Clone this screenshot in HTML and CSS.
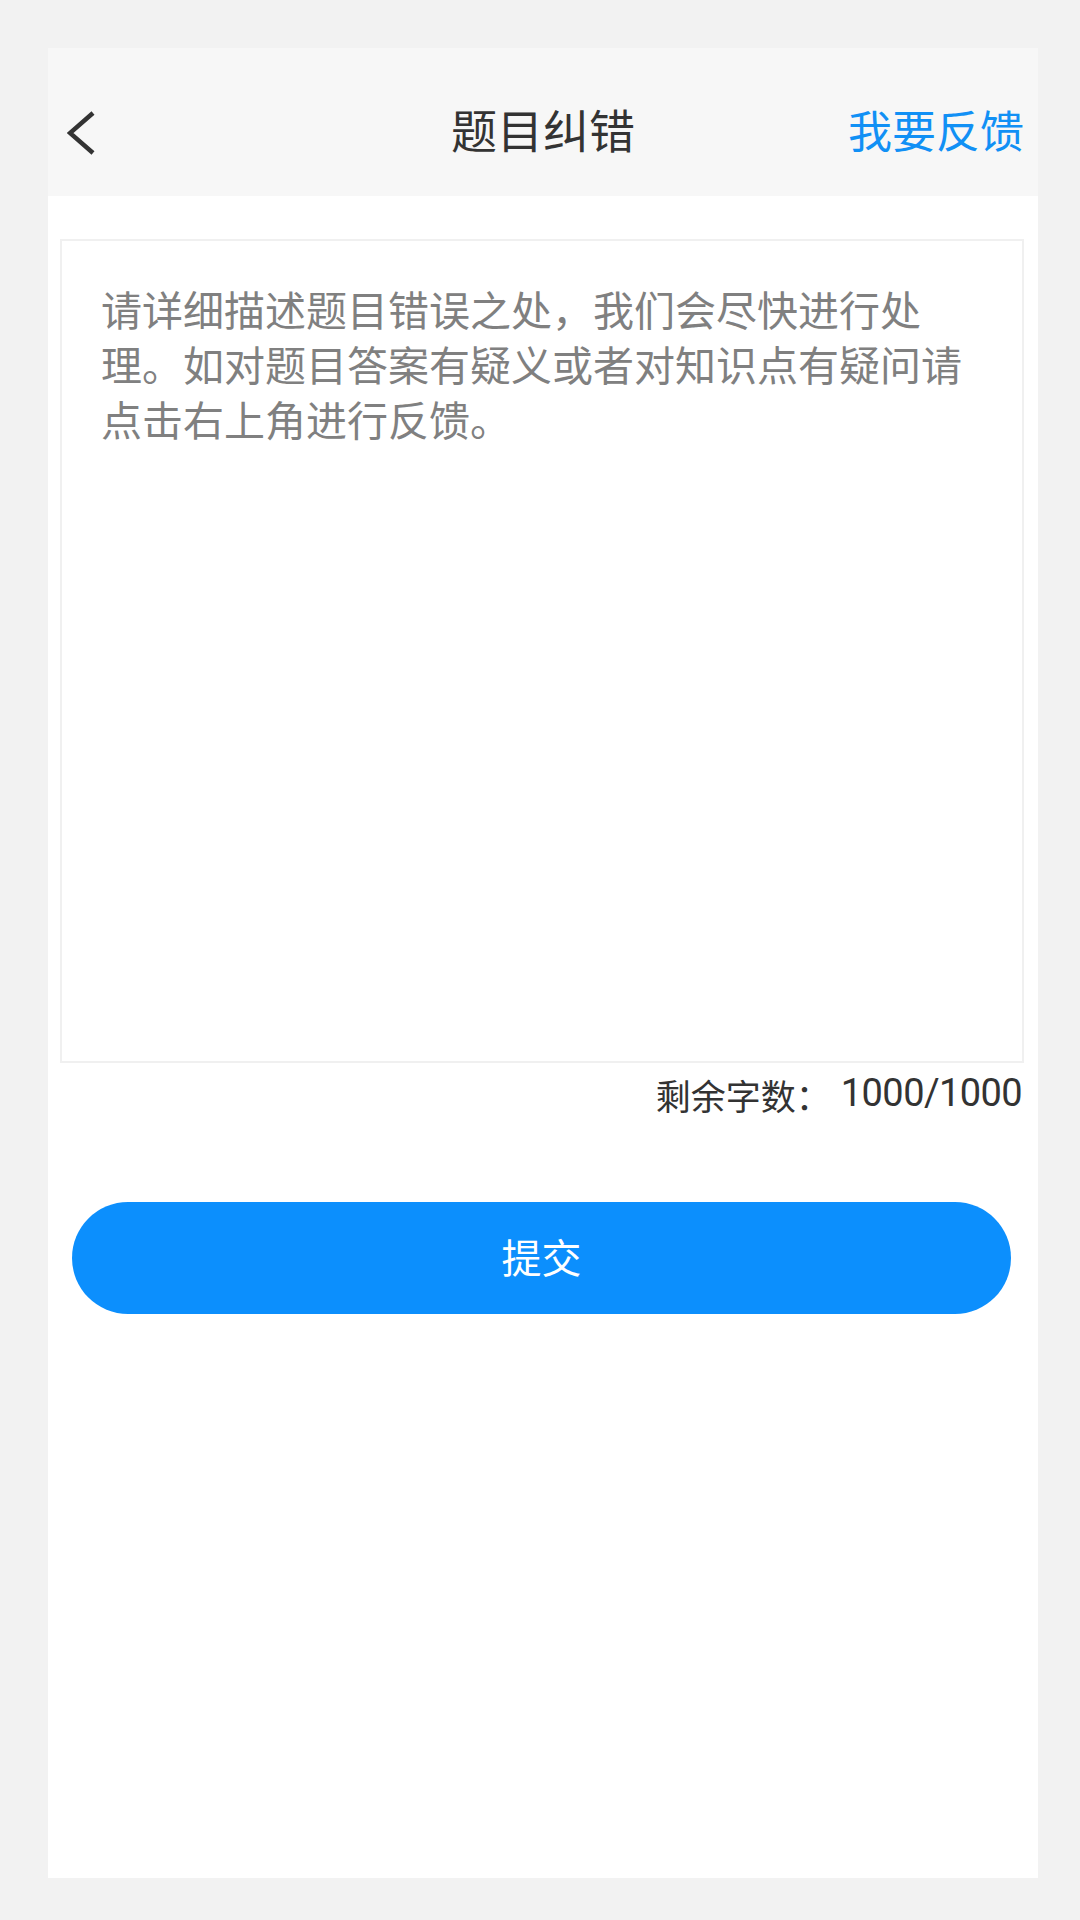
FILE: index.html
```html
<!DOCTYPE html>
<html lang="zh-CN">
<head>
<meta charset="utf-8">
<title>题目纠错</title>
<link rel="stylesheet" href="styles.css">
</head>
<body>
<div class="panel">
  <header class="header">
    <div class="header-left">
      <svg class="back" width="28" height="44" viewBox="0 0 28 44"><polyline points="26,2 3,22 26,42" fill="none" stroke="#333" stroke-width="4.5"/></svg>
    </div>
    <div class="title">题目纠错</div>
    <div class="header-right"><span class="link">我要反馈</span></div>
  </header>
  <main class="content">
    <div class="textbox">请详细描述题目错误之处，我们会尽快进行处理。如对题目答案有疑义或者对知识点有疑问请点击右上角进行反馈。</div>
    <div class="counter"><span class="counter-label">剩余字数：</span><span class="counter-num">1000/1000</span></div>
    <button class="submit">提交</button>
  </main>
</div>
</body>
</html>
```
FILE: styles.css
```css
html, body {
  margin: 0;
  padding: 0;
}
body {
  background: #f2f2f2;
  padding: 48px 42px 42px 48px;
  font-family: "Noto Sans CJK SC", "Noto Sans", sans-serif;
}
.panel {
  width: 990px;
  height: 1830px;
  background: #ffffff;
  display: flex;
  flex-direction: column;
}
.header {
  height: 148px;
  box-sizing: border-box;
  padding-top: 22px;
  background: #f7f7f7;
  display: grid;
  grid-template-columns: 1fr auto 1fr;
  align-items: center;
}
.header-left {
  padding-left: 19px;
  display: flex;
  align-items: center;
}
.back {
  display: block;
}
.title {
  font-size: 46px;
  color: #333333;
  line-height: 60px;
  position: relative;
  top: -5px;
}
.header-right {
  display: flex;
  justify-content: flex-end;
  padding-right: 14px;
}
.link {
  font-size: 44px;
  color: #1190f5;
  line-height: 60px;
  position: relative;
  top: -4px;
}
.content {
  display: flex;
  flex-direction: column;
  padding: 43px 14px 0 12px;
}
.textbox {
  height: 824px;
  box-sizing: border-box;
  border: 2px solid #f0f0f0;
  padding: 40px 41px 42px 39px;
  font-size: 41px;
  line-height: 55px;
  color: #808080;
}
.counter {
  margin-top: 8px;
  height: 48px;
  display: flex;
  justify-content: flex-end;
  align-items: baseline;
  padding-right: 2px;
  color: #333333;
}
.counter-label {
  font-size: 35px;
  line-height: 48px;
}
.counter-num {
  font-family: Roboto, "Noto Sans", sans-serif;
  font-size: 38px;
  letter-spacing: -0.6px;
  line-height: 48px;
  margin-left: 10px;
  position: relative;
  top: -4px;
}
.submit {
  margin: 83px 13px 0 12px;
  height: 112px;
  border: none;
  border-radius: 56px;
  background: #0c8ffd;
  color: #ffffff;
  font-family: "Noto Sans CJK SC", "Noto Sans", sans-serif;
  font-size: 40px;
  padding: 0 0 4px 0;
}
```
